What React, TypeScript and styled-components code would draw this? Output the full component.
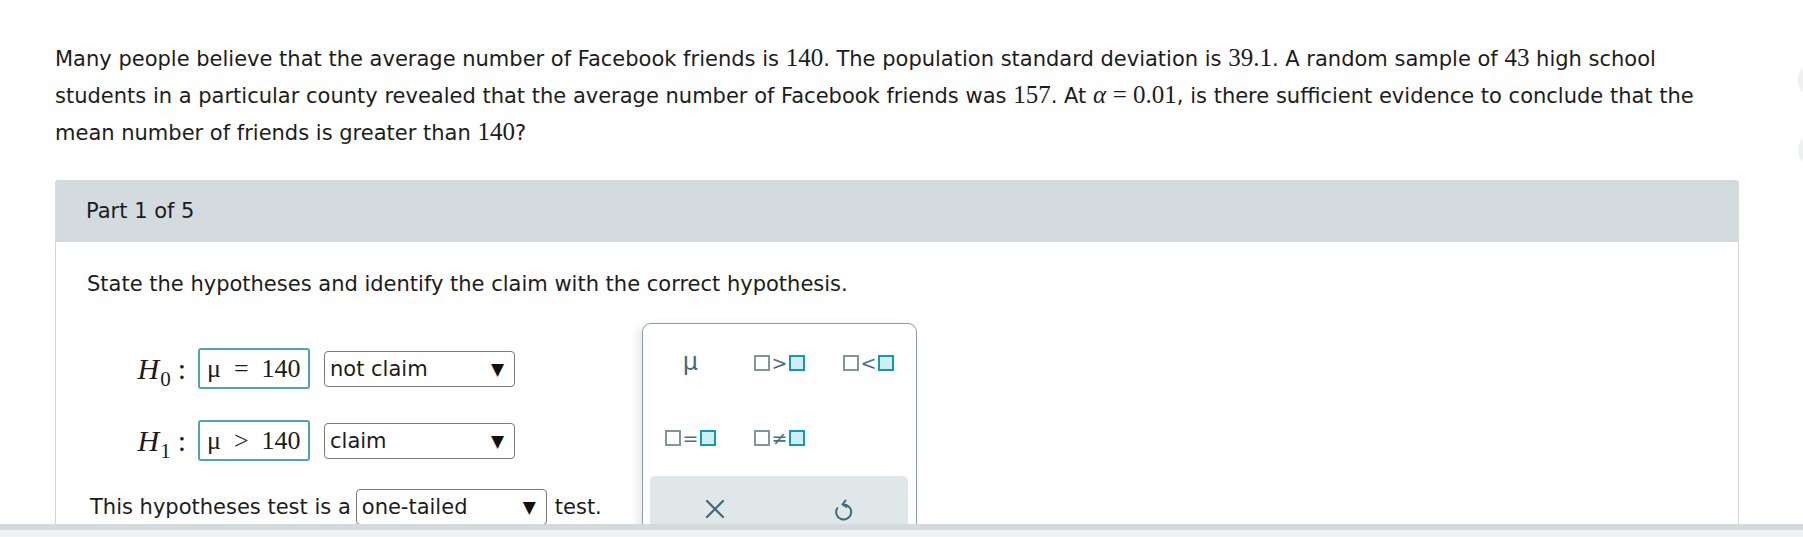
import React from "react";
import styled, { createGlobalStyle } from "styled-components";

const GlobalStyle = createGlobalStyle`
  html, body { margin: 0; padding: 0; background: #ffffff; }
  body { font-family: "DejaVu Sans", Verdana, sans-serif; color: #1c1c1c; }
  * { box-sizing: border-box; }
`;

const Page = styled.div`
  width: 1803px;
  height: 537px;
  display: flex;
  flex-direction: column;
  overflow: hidden;
  position: relative;
`;

const Viewport = styled.div`
  height: 524px;
  overflow: hidden;
  position: relative;
`;

const Content = styled.div`
  padding: 41px 64px 0 55px;
`;

const Problem = styled.p`
  margin: 0 0 28px 0;
  font-size: 21px;
  line-height: 37px;
  white-space: nowrap;
`;

const M = styled.span`
  font-family: "Liberation Serif", "Times New Roman", serif;
  font-size: 25px;
  line-height: 1;
`;

const MI = styled(M)`
  font-style: italic;
`;

const PartPanel = styled.section`
  border: 1px solid #cfd7da;
  border-top: none;
  border-bottom: none;
  border-radius: 4px 4px 0 0;
  min-height: 400px;
`;

const PartHeader = styled.div`
  height: 62px;
  background: #d3dbde;
  border-radius: 4px 4px 0 0;
  display: flex;
  align-items: center;
  padding-left: 31px;
  font-size: 21px;
  margin: 0 -1px;
`;

const PartBody = styled.div`
  position: relative;
  padding: 29px 0 0 31px;
`;

const Prompt = styled.div`
  font-size: 21px;
  line-height: 26px;
  margin-bottom: 51px;
`;

const HypRow = styled.div<{ $gap: number }>`
  display: flex;
  align-items: center;
  margin-bottom: ${(p) => p.$gap}px;
`;

const HLabel = styled.div`
  width: 111px;
  display: flex;
  justify-content: flex-end;
  align-items: baseline;
  padding-right: 12px;
  font-family: "Liberation Serif", "Times New Roman", serif;
  font-size: 30px;
  line-height: 1;
  color: #1c1c1c;
`;

const HLetter = styled.i`
  font-style: italic;
`;

const HSub = styled.span`
  font-size: 21px;
  position: relative;
  top: 7px;
  margin-left: 1px;
`;

const Colon = styled.span`
  margin-left: 7px;
`;

const MathBox = styled.div`
  width: 112px;
  height: 41px;
  border: 2px solid #4ca4b6;
  border-radius: 3px;
  display: flex;
  align-items: center;
  padding-left: 7px;
  font-family: "Liberation Serif", "Times New Roman", serif;
  font-size: 26px;
  white-space: pre;
`;

const SelectBox = styled.div<{ $w: number; $ml: number }>`
  width: ${(p) => p.$w}px;
  height: 36px;
  margin-left: ${(p) => p.$ml}px;
  border: 1px solid #7a7a7a;
  border-radius: 4px;
  display: flex;
  align-items: center;
  justify-content: space-between;
  padding: 0 10px 0 5px;
  font-size: 21px;
  background: #fff;
`;

const Arrow = styled.span`
  font-size: 17px;
  color: #111;
`;

const TestRow = styled.div`
  display: flex;
  align-items: center;
  padding-left: 3px;
  font-size: 21px;
`;

const AfterText = styled.span`
  margin-left: 8px;
`;

const Keypad = styled.div`
  position: absolute;
  left: 586px;
  top: 81px;
  width: 275px;
  height: 240px;
  border: 1px solid #88a1a8;
  border-radius: 9px;
  background: #fff;
  box-shadow: -4px 2px 8px rgba(40, 60, 70, 0.12);
  padding: 1px 4px 0 3px;
`;

const KeyGrid = styled.div`
  display: grid;
  grid-template-columns: repeat(3, 89px);
  grid-auto-rows: 75px;
`;

const Key = styled.div`
  display: flex;
  align-items: center;
  justify-content: center;
  color: #3d6a78;
`;

const Mu = styled.span`
  font-family: "DejaVu Sans", sans-serif;
  font-size: 24px;
  color: #3f6c7a;
  margin-top: -2px;
`;

const Slot = styled.span<{ $active?: boolean }>`
  display: inline-block;
  width: 16px;
  height: 16px;
  border: 2px solid ${(p) => (p.$active ? "#1797b0" : "#7e979e")};
  background: ${(p) => (p.$active ? "#cdeef3" : "#ffffff")};
`;

const Op = styled.span`
  font-family: "DejaVu Sans", sans-serif;
  font-size: 19px;
  color: #4b7382;
  margin: 0 2px;
  line-height: 16px;
`;

const ActionBar = styled.div`
  margin: 1px 4px 0 4px;
  height: 90px;
  background: #e0e7e9;
  border-radius: 5px;
  display: grid;
  grid-template-columns: 1fr 1fr;
  align-items: start;
  padding-top: 22px;
`;

const ActionBtn = styled.div`
  display: flex;
  justify-content: center;
`;

const SideButton = styled.div<{ $top: number }>`
  position: absolute;
  left: 1798px;
  top: ${(p) => p.$top}px;
  width: 36px;
  height: 36px;
  border-radius: 50%;
  background: #eef1f2;
`;

const FooterDark = styled.div`
  height: 6px;
  background: #d3dbde;
`;

const FooterLight = styled.div`
  height: 7px;
  background: #eef2f3;
`;

const KeyPair = ({ op }: { op: string }) => (
  <Key>
    <Slot />
    <Op>{op}</Op>
    <Slot $active />
  </Key>
);

const CloseIcon = () => (
  <svg width="22" height="22" viewBox="0 0 22 22" fill="none">
    <path d="M3 3 L19 19 M19 3 L3 19" stroke="#3f6b77" strokeWidth="2.2" strokeLinecap="round" />
  </svg>
);

const UndoIcon = () => (
  <svg width="22" height="24" viewBox="0 0 22 24" fill="none">
    <path
      d="M10.5 6.5 A7.5 7.5 0 1 1 4.2 10.2"
      stroke="#3f6b77"
      strokeWidth="2"
      strokeLinecap="round"
    />
    <path d="M12.5 2.5 L9.5 6.5 L13.5 9" stroke="#3f6b77" strokeWidth="2" strokeLinecap="round" strokeLinejoin="round" />
  </svg>
);

export default function App() {
  return (
    <>
      <GlobalStyle />
      <Page>
        <Viewport>
          <Content>
            <Problem>
              Many people believe that the average number of Facebook friends is <M>140</M>. The population standard deviation is <M>39.1</M>. A random sample of <M>43</M> high school
              <br />
              students in a particular county revealed that the average number of Facebook friends was <M>157</M>. At <MI>α</MI> <M>= 0.01</M>, is there sufficient evidence to conclude that the
              <br />
              mean number of friends is greater than <M>140</M>?
            </Problem>
            <PartPanel>
              <PartHeader>Part 1 of 5</PartHeader>
              <PartBody>
                <Prompt>State the hypotheses and identify the claim with the correct hypothesis.</Prompt>
                <HypRow $gap={31}>
                  <HLabel>
                    <HLetter>H</HLetter>
                    <HSub>0</HSub>
                    <Colon>:</Colon>
                  </HLabel>
                  <MathBox>{"μ  =  140"}</MathBox>
                  <SelectBox $w={191} $ml={14}>
                    not claim<Arrow>▼</Arrow>
                  </SelectBox>
                </HypRow>
                <HypRow $gap={28}>
                  <HLabel>
                    <HLetter>H</HLetter>
                    <HSub>1</HSub>
                    <Colon>:</Colon>
                  </HLabel>
                  <MathBox>{"μ  >  140"}</MathBox>
                  <SelectBox $w={191} $ml={14}>
                    claim<Arrow>▼</Arrow>
                  </SelectBox>
                </HypRow>
                <TestRow>
                  This hypotheses test is a
                  <SelectBox $w={191} $ml={5}>
                    one-tailed<Arrow>▼</Arrow>
                  </SelectBox>
                  <AfterText>test.</AfterText>
                </TestRow>
                <Keypad>
                  <KeyGrid>
                    <Key>
                      <Mu>μ</Mu>
                    </Key>
                    <KeyPair op=">" />
                    <KeyPair op="<" />
                    <KeyPair op="=" />
                    <KeyPair op="≠" />
                  </KeyGrid>
                  <ActionBar>
                    <ActionBtn>
                      <CloseIcon />
                    </ActionBtn>
                    <ActionBtn>
                      <UndoIcon />
                    </ActionBtn>
                  </ActionBar>
                </Keypad>
              </PartBody>
            </PartPanel>
          </Content>
          <SideButton $top={62} />
          <SideButton $top={132} />
        </Viewport>
        <FooterDark />
        <FooterLight />
      </Page>
    </>
  );
}
